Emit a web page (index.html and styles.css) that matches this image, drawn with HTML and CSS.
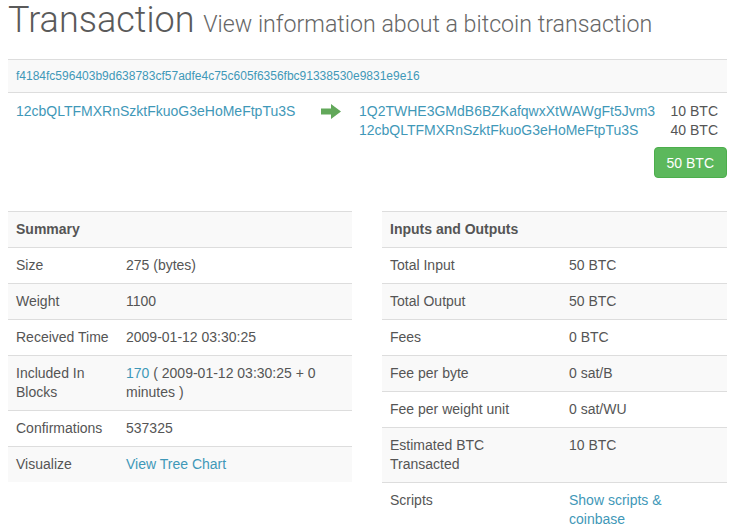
FILE: index.html
```html
<!DOCTYPE html>
<html>
<head>
<meta charset="utf-8">
<link rel="stylesheet" href="styles.css">
</head>
<body>
<div class="page">
  <h1 class="title">Transaction <small class="subtitle">View information about a bitcoin transaction</small></h1>

  <div class="hash-box"><a class="link" href="#">f4184fc596403b9d638783cf57adfe4c75c605f6356fbc91338530e9831e9e16</a></div>

  <div class="tx">
    <div class="tx-in"><a class="link" href="#">12cbQLTFMXRnSzktFkuoG3eHoMeFtpTu3S</a></div>
    <div class="tx-arrow">
      <svg width="20" height="15" viewBox="0 0 20 15"><path d="M0 4.5h10V0l10 7.5-10 7.5v-4.5H0z" fill="#62a85a"/></svg>
    </div>
    <div class="tx-out">
      <div class="out-row"><a class="link" href="#">1Q2TWHE3GMdB6BZKafqwxXtWAWgFt5Jvm3</a><span class="amt">10 BTC</span></div>
      <div class="out-row"><a class="link" href="#">12cbQLTFMXRnSzktFkuoG3eHoMeFtpTu3S</a><span class="amt">40 BTC</span></div>
    </div>
  </div>
  <div class="total-row"><span class="btn-total">50 BTC</span></div>

  <div class="tables">
    <table class="info left">
      <colgroup><col class="col-lbl"><col></colgroup>
      <tr><th colspan="2">Summary</th></tr>
      <tr><td>Size</td><td>275 (bytes)</td></tr>
      <tr><td>Weight</td><td>1100</td></tr>
      <tr><td>Received Time</td><td>2009-01-12 03:30:25</td></tr>
      <tr><td>Included In Blocks</td><td><a class="link" href="#">170</a> ( 2009-01-12 03:30:25 + 0 minutes )</td></tr>
      <tr><td>Confirmations</td><td>537325</td></tr>
      <tr><td>Visualize</td><td><a class="link" href="#">View Tree Chart</a></td></tr>
    </table>
    <table class="info right">
      <colgroup><col class="col-lbl"><col></colgroup>
      <tr><th colspan="2">Inputs and Outputs</th></tr>
      <tr><td>Total Input</td><td>50 BTC</td></tr>
      <tr><td>Total Output</td><td>50 BTC</td></tr>
      <tr><td>Fees</td><td>0 BTC</td></tr>
      <tr><td>Fee per byte</td><td>0 sat/B</td></tr>
      <tr><td>Fee per weight unit</td><td>0 sat/WU</td></tr>
      <tr><td><span class="lbl-narrow">Estimated BTC Transacted</span></td><td>10 BTC</td></tr>
      <tr><td>Scripts</td><td><span class="val-narrow"><a class="link" href="#">Show scripts &amp; coinbase</a></span></td></tr>
    </table>
  </div>
</div>
</body>
</html>
```
FILE: styles.css
```css
html, body {
  margin: 0;
  padding: 0;
  background: #fff;
}
body {
  font-family: "Liberation Sans", Arial, sans-serif;
  font-size: 14px;
  color: #555;
}
.page {
  width: 719px;
  padding: 0 8px;
}
.link {
  color: #3f98b8;
  text-decoration: none;
}
.title {
  margin: 0;
  padding-top: 0;
  font-family: Roboto, "Liberation Sans", sans-serif;
  font-weight: 300;
  font-size: 36px;
  line-height: 40px;
  color: #5a5a5a;
}
.subtitle {
  font-size: 23.2px;
  color: #666;
  font-weight: 300;
}
.hash-box {
  margin-top: 15px;
  border-top: 1px solid #ddd;
  border-bottom: 1px solid #ddd;
  background: #f9f9f9;
  padding: 8px;
  font-size: 12px;
  line-height: 16px;
}
.tx {
  display: flex;
  padding: 9px 9px 0 8px;
  line-height: 19px;
}
.tx-in {
  width: 305px;
}
.tx-arrow {
  width: 38px;
  padding-top: 2px;
}
.tx-arrow svg {
  display: block;
}
.tx-out {
  flex: 1;
}
.out-row {
  display: flex;
  justify-content: space-between;
}
.total-row {
  display: flex;
  justify-content: flex-end;
  margin-top: 7px;
}
.btn-total {
  display: inline-block;
  background: #5cb85c;
  border: 1px solid #4cae4c;
  border-radius: 4px;
  color: #fff;
  padding: 5px 12px 4px;
  line-height: 20px;
}
.tables {
  display: grid;
  grid-template-columns: 344px 345px;
  column-gap: 30px;
  margin-top: 33px;
  align-items: start;
}
.info {
  border-collapse: collapse;
  table-layout: fixed;
  width: 100%;
  line-height: 19px;
}
.info th, .info td {
  text-align: left;
  vertical-align: top;
  padding: 8px;
  border-top: 1px solid #ddd;
}
.info th {
  font-weight: bold;
}
.info tr:nth-child(odd) {
  background: #f9f9f9;
}
.left .col-lbl {
  width: 110px;
}
.right .col-lbl {
  width: 179px;
}
.lbl-narrow {
  display: block;
  max-width: 140px;
}
.val-narrow {
  display: block;
  max-width: 140px;
}
```
